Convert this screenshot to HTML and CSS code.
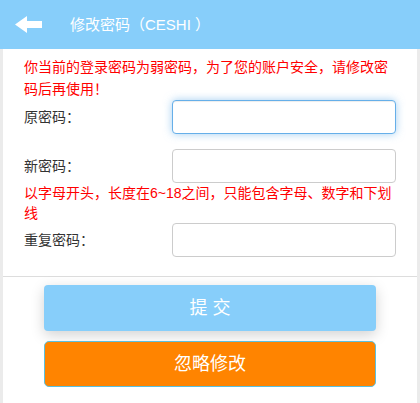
FILE: index.html
```html
<!DOCTYPE html>
<html lang="zh-CN">
<head>
<meta charset="utf-8">
<title>修改密码</title>
<link rel="stylesheet" href="styles.css">
</head>
<body>
<header class="topbar">
  <svg class="back" width="27" height="17" viewBox="0 0 27 17" aria-hidden="true">
    <polygon points="0,8.5 12,0 12,5 27,5 27,12 12,12 12,17" fill="#fff"/>
  </svg>
  <h1 class="title">修改密码（CESHI ）</h1>
</header>
<main class="page">
  <form class="form">
    <p class="notice">你当前的登录密码为弱密码，为了您的账户安全，请修改密码后再使用！</p>
    <div class="row">
      <label class="label">原密码：</label>
      <input class="field focus" type="password">
    </div>
    <div class="row spaced">
      <label class="label">新密码：</label>
      <input class="field" type="password">
    </div>
    <p class="hint">以字母开头，长度在6~18之间，只能包含字母、数字和下划线</p>
    <div class="row">
      <label class="label">重复密码：</label>
      <input class="field" type="password">
    </div>
  </form>
  <div class="actions">
    <button class="btn submit" type="button">提 交</button>
    <button class="btn skip" type="button">忽略修改</button>
  </div>
</main>
</body>
</html>
```
FILE: styles.css
```css
* { box-sizing: border-box; }
html, body { margin: 0; padding: 0; }
body {
  background: #ebebeb;
  font-family: "Liberation Sans", "Noto Sans CJK SC", sans-serif;
  height: 403px;
  overflow: hidden;
}
.topbar {
  height: 49px;
  background: #87cefa;
  display: flex;
  align-items: center;
  padding-left: 15px;
}
.back { display: block; margin-top: 0; }
.title {
  margin: 0 0 0 28px;
  font-size: 15px;
  font-weight: normal;
  color: #fff;
  line-height: 20px;
}
.page {
  width: 414px;
  margin: 0 auto;
  background: #fff;
  height: 354px;
}
.form {
  padding: 7px 21px 19px;
  border-bottom: 1px solid #dddddd;
}
.notice {
  margin: 0;
  color: #ff0000;
  font-size: 14px;
  line-height: 22px;
}
.row {
  display: grid;
  grid-template-columns: 148px 224px;
  align-items: center;
}
.row.spaced { margin-top: 15px; }
.label {
  font-size: 14px;
  color: #333;
  line-height: 20px;
}
.field {
  height: 34px;
  width: 224px;
  border: 1px solid #cccccc;
  border-radius: 4px;
  background: #fff;
  margin: 0;
  padding: 6px 12px;
  outline: none;
}
.field.focus {
  border-color: #66afe9;
  box-shadow: inset 0 1px 1px rgba(0,0,0,.075), 0 0 8px rgba(102,175,233,.6);
}
.hint {
  margin: 0;
  color: #ff0000;
  font-size: 14px;
  line-height: 20px;
}
.actions {
  display: flex;
  flex-direction: column;
  align-items: center;
  gap: 10px;
  padding-top: 8px;
}
.btn {
  width: 332px;
  height: 46px;
  border-radius: 4px;
  color: #fff;
  font-family: "Liberation Sans", "Noto Sans CJK SC", sans-serif;
  font-size: 18px;
  line-height: 20px;
  padding: 0;
  cursor: pointer;
}
.submit {
  background: #87cefa;
  border: none;
  box-shadow: 0 4px 14px rgba(0,0,0,.18);
}
.skip {
  background: #ff8400;
  border: 1px solid #5bc0de;
  border-radius: 5px;
}
```
